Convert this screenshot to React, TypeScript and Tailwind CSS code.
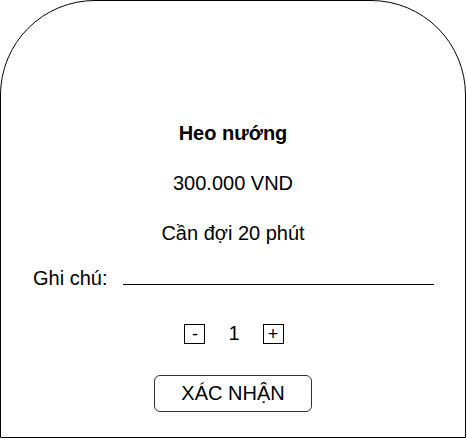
export default function App() {
  return (
    <div className="w-[466px] h-[438px] bg-white" style={{ fontFamily: '"Liberation Sans", Arial, sans-serif' }}>
      <div className="w-[466px] h-[438px] border border-black rounded-t-[95px] flex flex-col items-center text-[20px] leading-[23px] text-black">
        <div className="mt-[121px] font-bold">Heo nướng</div>
        <div className="mt-[27px]">300.000 VND</div>
        <div className="mt-[27px]">Cần đợi 20 phút</div>
        <div className="mt-[22px] w-full flex items-center pl-[32px]">
          <span>Ghi chú:</span>
          <div className="ml-[16px] w-[311px] h-[1px] bg-black translate-y-[6px]" />
        </div>
        <div className="mt-[32px] flex items-center translate-x-[1px]">
          <div className="w-[21px] h-[20px] border border-black flex items-center justify-center text-[18px] leading-none text-black">-</div>
          <span className="mx-[23px]">1</span>
          <div className="w-[21px] h-[20px] border border-black flex items-center justify-center text-[18px] leading-none text-black">+</div>
        </div>
        <button className="mt-[30px] w-[158px] h-[37px] rounded-[6px] border border-[#333] flex items-center justify-center text-[20px] text-black">
          XÁC NHẬN
        </button>
      </div>
    </div>
  );
}
